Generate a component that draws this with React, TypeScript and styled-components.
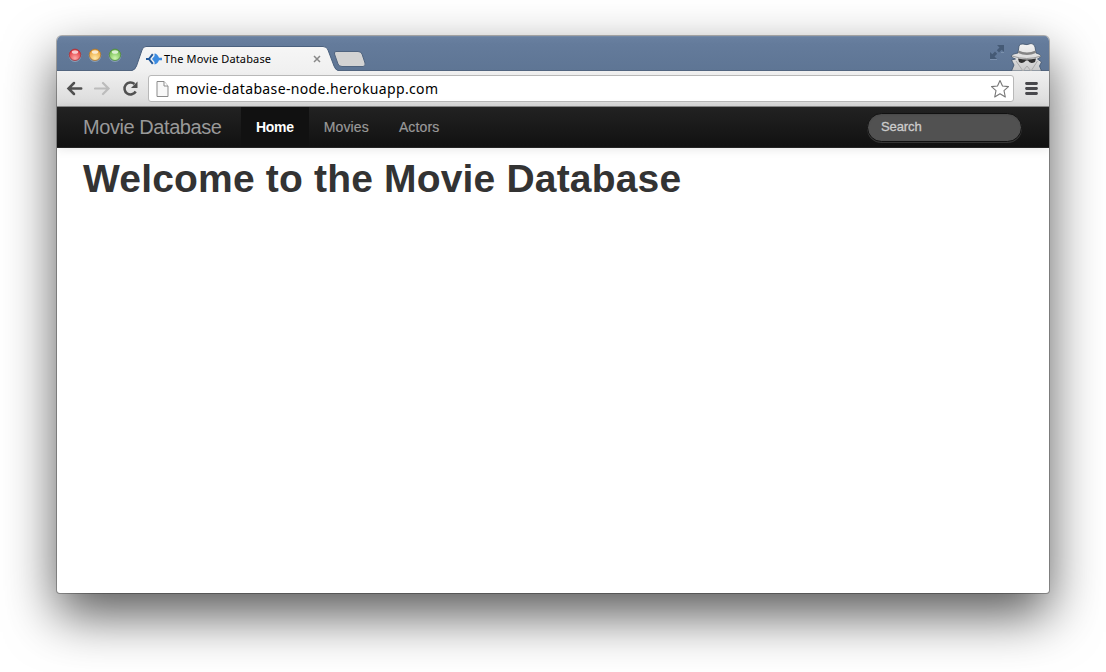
import React from 'react';
import styled, { createGlobalStyle } from 'styled-components';

const Global = createGlobalStyle`
  * { box-sizing: border-box; }
  body { margin: 0; background: #fff; overflow: hidden; font-family: "Liberation Sans", Arial, sans-serif; }
`;

const Desktop = styled.div`
  width: 1106px;
  height: 672px;
  padding: 36px 57px 79px;
  background: #fff;
`;

const Window = styled.main`
  display: flex;
  flex-direction: column;
  width: 992px;
  height: 557px;
  border-radius: 5px 5px 3px 3px;
  overflow: hidden;
  background: #fff;
  box-shadow: 0 0 0 1px rgba(0, 0, 0, 0.28), 0 22px 52px rgba(0, 0, 0, 0.66);
`;

const TitleBar = styled.header`
  display: flex;
  height: 35px;
  padding-left: 11px;
  background: linear-gradient(#6a81a1, #647b9b 8px, #5e7594);
  box-shadow: inset 0 1px #7489a6, inset 0 -1px #52657f;
`;

const Lights = styled.div`
  display: flex;
  gap: 6px;
  padding-top: 12px;
  width: 64px;
`;

const Light = styled.svg`
  display: block;
  width: 14px;
  height: 14px;
  flex: none;
`;

const Tab = styled.div`
  position: relative;
  display: flex;
  align-items: center;
  width: 206px;
  height: 25px;
  margin-top: 10px;
  padding: 1px 17px 1px 14px;
`;

const TabShape = styled.svg`
  position: absolute;
  inset: 0;
`;

const Favicon = styled.svg`
  position: relative;
  width: 16px;
  height: 14px;
  flex: none;
`;

const TabTitle = styled.span`
  position: relative;
  margin-left: 2px;
  flex: 1;
  font: 11px/16px "Noto Sans", "Open Sans", sans-serif;
  letter-spacing: 0.14px;
  white-space: nowrap;
  color: #000;
`;

const Close = styled.svg`
  position: relative;
  width: 8px;
  height: 8px;
  flex: none;
`;

const NewTab = styled.svg`
  margin: 14px 0 0 -5px;
`;

const WindowTools = styled.div`
  display: flex;
  margin-left: auto;
  padding-right: 6px;
  gap: 4px;
`;

const Toolbar = styled.div`
  display: flex;
  align-items: center;
  height: 36px;
  padding: 0 11px 0 9px;
  background: linear-gradient(#f0f0f0, #dadada);
  border-bottom: 1px solid #8a8a8a;
`;

const NavIcon = styled.svg`
  width: 18px;
  height: 18px;
  margin-right: 10px;
  flex: none;
`;

const AddressBar = styled.div`
  display: flex;
  align-items: center;
  width: 866px;
  height: 27px;
  margin-left: -2px;
  padding: 0 3px 0 7px;
  background: #fff;
  border: 1px solid #b8b8b8;
  border-radius: 3px;
`;

const Url = styled.span`
  flex: 1;
  margin-left: 7px;
  font: 14px/20px "Noto Sans", "Open Sans", sans-serif;
  letter-spacing: 0.36px;
  color: #000;
`;

const MenuButton = styled.svg`
  margin-left: auto;
`;

const Navbar = styled.nav`
  display: flex;
  height: 41px;
  padding: 0 27px 0 26px;
  background: linear-gradient(#222, #111);
  border-bottom: 1px solid #252525;
  box-shadow: 0 1px 10px rgba(0, 0, 0, 0.1);
`;

const Brand = styled.a`
  width: 158px;
  font-size: 20px;
  line-height: 40px;
  color: #999;
  letter-spacing: -0.43px;
  white-space: nowrap;
`;

const NavLink = styled.a<{ $active?: boolean }>`
  padding: 0 15px;
  font-size: 14px;
  line-height: 40px;
  color: ${p => (p.$active ? '#fff' : '#999')};
  font-weight: ${p => (p.$active ? 700 : 400)};
  background: ${p => (p.$active ? '#111' : 'transparent')};
  letter-spacing: ${p => (p.$active ? '-0.3px' : '0.14px')};
  -webkit-text-stroke: ${p => (p.$active ? '0' : '0.2px #999')};
`;

const Search = styled.div`
  width: 155px;
  height: 29px;
  margin: 6px 0 0 auto;
  padding-left: 13px;
  border: 1px solid #111;
  border-radius: 15px;
  background: #515151;
  box-shadow: inset 0 1px 2px rgba(0, 0, 0, 0.1), 0 1px 0 rgba(255, 255, 255, 0.15);
  font-size: 13px;
  line-height: 26px;
  color: #ccc;
  letter-spacing: -0.1px;
  -webkit-text-stroke: 0.3px #ccc;
`;

const Content = styled.section`
  flex: 1;
  padding: 11px 26px;
`;

const Heading = styled.h1`
  margin: 0;
  font-size: 39px;
  line-height: 40px;
  letter-spacing: 0.18px;
  color: #333;
  white-space: nowrap;
`;

const lights = [
  { id: 'close', rim: '#a33238', base: '#e0353b', glow: '#ffaaa8' },
  { id: 'minimize', rim: '#a8742f', base: '#eba63b', glow: '#ffe9a8' },
  { id: 'zoom', rim: '#4d873c', base: '#71b950', glow: '#cdf7ad' },
];

export default function App() {
  return (
    <Desktop>
      <Global />
      <Window>
        <TitleBar>
          <Lights>
            {lights.map(l => (
              <Light key={l.id} viewBox="0 0 14 14">
                <defs>
                  <radialGradient id={l.id} cx="50%" cy="80%" r="70%">
                    <stop offset="0" stopColor={l.glow} />
                    <stop offset="1" stopColor={l.base} />
                  </radialGradient>
                </defs>
                <circle cx="7" cy="7.6" r="6.300" fill="#8ba0b9" />
                <circle cx="7" cy="6.800" r="5.700" fill={`url(#${l.id})`} stroke={l.rim} strokeWidth=".8" />
                <ellipse cx="7" cy="4" rx="3.200" ry="1.800" fill="#fff" opacity=".7" />
              </Light>
            ))}
          </Lights>
          <Tab>
            <TabShape width="206" height="25" viewBox="0 0 206 25">
              <defs>
                <linearGradient id="tab" x2="0" y2="1">
                  <stop stopColor="#f6f6f6" />
                  <stop offset="1" stopColor="#f0f0f0" />
                </linearGradient>
              </defs>
              <path d="M0 24.500Q3 24 4.500 20L10 4Q11 .5 14 .5H191Q195 .5 196 4L202 20Q203.500 24 206 24.500V25H0Z" fill="url(#tab)" />
              <path d="M0 24.500Q3 24 4.500 20L10 4Q11 .5 14 .5H191Q195 .5 196 4L202 20Q203.500 24 206 24.500" fill="none" stroke="#4a607e" />
            </TabShape>
            <Favicon viewBox="0 0 16 14">
              <path d="M6.800 2.200L3 7l3.800 4.800M0 7H3" fill="none" stroke="#24599a" strokeWidth="2" />
              <path d="M8.500 1.500Q11.500 1.800 13 5.700H16V8.300H13Q11.500 12.200 8.500 12.500V10L6 7L8.500 4Z" fill="#3c8be0" />
            </Favicon>
            <TabTitle>The Movie Database</TabTitle>
            <Close viewBox="0 0 8 8"><path d="M1 1l6 6M7 1L1 7" stroke="#888" strokeWidth="1.500" /></Close>
          </Tab>
          <NewTab width="34" height="18" viewBox="0 0 34 18">
            <path d="M3 1.500H25Q28 1.500 29 4L32 13Q33 16.500 30 16.500H9Q6 16.500 5 14L1.500 4Q1 1.500 3 1.500Z" fill="#d3d3d3" stroke="#50647f" />
          </NewTab>
          <WindowTools>
            <svg width="17" height="34" viewBox="0 0 17 34">
              <path d="M8 9H15V16L12.700 13.700L10 16.400L7.800 14.200L10.500 11.500ZM1 16L3.300 18.300L6 15.600L8.200 17.800L5.500 20.500L8 23H1Z" fill="#455a75" />
              <path d="M1 23.500H8M12 16.500H15" stroke="#8297b2" strokeWidth=".8" />
            </svg>
            <svg width="33" height="35" viewBox="0 0 33 35">
              <defs>
                <linearGradient id="coat" x2="0" y2="1">
                  <stop stopColor="#f3f3f3" />
                  <stop offset="1" stopColor="#c8c8c8" />
                </linearGradient>
              </defs>
              <path d="M8 17L9 10Q10 7.500 13 8Q17 9.500 21 7.500Q24 7.500 25 11L26 17Q30 18 31 20Q30 22 27.500 23L31.500 26L29.500 30L31.500 35H1.500L4 29L1.500 24L5.500 23Q2 22 1 20Q3 17.500 8 17Z" fill="url(#coat)" stroke="#40536b" strokeWidth=".8" />
              <path d="M8.500 14.500Q17 18.500 25.500 14.500L26 17Q17 21 8 17Z" fill="#858585" />
              <path d="M2 20Q17 25 31 20" fill="none" stroke="#999" />
              <path d="M8 22.500Q17 24.500 26 22.500L25 26Q20 28.500 18 24.500H16Q13 28.500 9 26Z" fill="#303030" />
              <path d="M6 25L13 35L17 30L21 35L27.500 25" fill="none" stroke="#aaa" />
            </svg>
          </WindowTools>
        </TitleBar>
        <Toolbar>
          <NavIcon viewBox="0 0 18 18"><path d="M15.200 8.500H3M8 3L2.500 8.500L8 14" fill="none" stroke="#505050" strokeWidth="2.500" strokeLinecap="round" /></NavIcon>
          <NavIcon viewBox="0 0 18 18"><path d="M1 8.500H13.500M9 3L14.500 8.500L9 14" fill="none" stroke="#bcbcbc" strokeWidth="2.200" strokeLinecap="round" /></NavIcon>
          <NavIcon viewBox="0 0 18 18">
            <path d="M12.500 4A6 6 0 1 0 13.700 11.500" fill="none" stroke="#505050" strokeWidth="2.500" />
            <path d="M15.500 1.500V8H9Z" fill="#505050" />
          </NavIcon>
          <AddressBar>
            <svg width="13" height="16" viewBox="0 0 13 16">
              <path d="M1 .5H8L12 5V15.500H1Z" fill="#f8f8f8" stroke="#8b8b8b" />
              <path d="M8 .5V5H12" fill="#fff" stroke="#8b8b8b" />
            </svg>
            <Url>movie-database-node.herokuapp.com</Url>
            <svg width="20" height="20" viewBox="0 0 20 20">
              <path d="M10 1.500L12.500 7L18.500 7.600L14 11.700L15.300 18L10 14.800L4.700 18L6 11.700L1.500 7.600L7.500 7Z" fill="#fff" stroke="#777" strokeWidth="1.100" strokeLinejoin="round" />
            </svg>
          </AddressBar>
          <MenuButton width="13" height="14" viewBox="0 0 13 14">
            <path d="M1.500 1.500H11.500M1.500 6.500H11.500M1.500 11.500H11.500" stroke="#48484c" strokeWidth="2.800" strokeLinecap="round" />
          </MenuButton>
        </Toolbar>
        <Navbar>
          <Brand>Movie Database</Brand>
          <NavLink $active>Home</NavLink>
          <NavLink>Movies</NavLink>
          <NavLink>Actors</NavLink>
          <Search>Search</Search>
        </Navbar>
        <Content>
          <Heading>Welcome to the Movie Database</Heading>
        </Content>
      </Window>
    </Desktop>
  );
}
